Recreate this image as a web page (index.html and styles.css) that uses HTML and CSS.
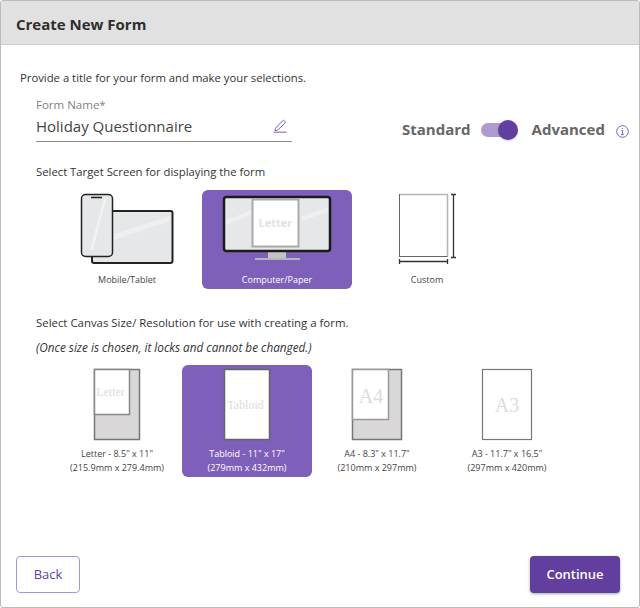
FILE: index.html
```html
<!DOCTYPE html>
<html lang="en">
<head>
    <meta charset="UTF-8">
    <meta name="viewport" content="width=device-width, initial-scale=1.0">
    <title>Create New Form</title>
    <link rel="stylesheet" href="styles.css">
</head>
<body>

    <div class="dialog">
        <h1 class="dialog-header">Create New Form</h1>

        <div class="dialog-body">
            <p class="intro">Provide a title for your form and make your selections.</p>

            <div class="name-row">
                <div class="name-field">
                    <label class="name-label">Form Name*</label>
                    <div class="name-input">
                        <span>Holiday Questionnaire</span>
                        <svg class="edit-icon" width="14" height="14" viewBox="0 0 14 14" fill="none" stroke="#7f5fbb" stroke-width="1">
                            <path d="M2.5 9.2 9.6 1.8a1.2 1.2 0 0 1 1.8 0l.5.5a1.2 1.2 0 0 1 0 1.8L4.6 11.2 2 11.6z"/>
                            <path d="M0.5 13.2h13"/>
                        </svg>
                    </div>
                </div>

                <div class="mode-switch">
                    <span>Standard</span>
                    <div class="toggle"><div class="toggle-knob"></div></div>
                    <span>Advanced</span>
                    <svg class="info-icon" width="13" height="13" viewBox="0 0 13 13" fill="none" stroke="#7f5fbb" stroke-width="1">
                        <circle cx="6.5" cy="6.5" r="5.8"/>
                        <path d="M5.2 5.4h1.5l-.4 4M5 9.6h2.8M6.4 3v1"/>
                    </svg>
                </div>
            </div>

            <p class="section-label target-label">Select Target Screen for displaying the form</p>

            <div class="card-row">
                <div class="card screen-card">
                    <svg width="150" height="80" viewBox="0 0 150 80">
                        <rect x="40" y="21" width="80.500" height="52" rx="2" fill="#e6e7e8" stroke="#222" stroke-width="2"/>
                        <path d="M62 44 118 26v5L62 50z" fill="#eeeff0"/>
                        <rect x="29.500" y="4.500" width="31" height="62" rx="4" fill="#e6e7e8" stroke="#222" stroke-width="1.500"/>
                        <path d="M38 60 52 8h2.500L41 60z" fill="#f1f2f2"/>
                        <path d="M39 7.500h11" stroke="#222" stroke-width="1.500"/>
                    </svg>
                    <span class="card-text">Mobile/Tablet</span>
                </div>

                <div class="card screen-card selected">
                    <svg width="150" height="80" viewBox="0 0 150 80">
                        <path d="M66 61h18v7H66z" fill="#c4c4c4"/>
                        <path d="M53 68h45v2H53z" fill="#b5b5b5"/>
                        <rect x="22" y="7" width="106" height="54" rx="2.500" fill="#e6e7e8" stroke="#1b1b1b" stroke-width="2.500"/>
                        <path d="M24 30 50 20v5L24 35zM100 26l26-9v5l-26 9z" fill="#eeeff0"/>
                        <rect x="50.500" y="9.500" width="46" height="47" fill="#fff" stroke="#aaa" stroke-width="2"/>
                        <text class="page-logo" x="73.500" y="37" text-anchor="middle">Letter</text>
                    </svg>
                    <span class="card-text">Computer/Paper</span>
                </div>

                <div class="card screen-card">
                    <svg width="150" height="80" viewBox="0 0 150 80" fill="none">
                        <rect x="47.500" y="4.500" width="48" height="62" fill="#fff" stroke="#666"/>
                        <path d="M48 4.500h48M95.500 4.500v62" stroke="#b5b5b5" stroke-width="1.500"/>
                        <path d="M101.500 4.500v63M99 4.500h5M99 67.500h5M47.500 71.500h48M47.500 69v5M95.500 69v5" stroke="#333" stroke-width="1.300"/>
                    </svg>
                    <span class="card-text">Custom</span>
                </div>
            </div>

            <p class="section-label canvas-label">Select Canvas Size/ Resolution for use with creating a form.</p>
            <p class="lock-note">(Once size is chosen, it locks and cannot be changed.)</p>

            <div class="card-row size-row">
                <div class="card size-card">
                    <svg width="130" height="78" viewBox="0 0 130 78">
                        <rect x="42.500" y="4.500" width="45" height="70" fill="#d9d7d8" stroke="#777" stroke-width="1.500"/>
                        <rect x="42.500" y="4.500" width="35" height="45" fill="#fff" stroke="#888" stroke-width="1.500"/>
                        <text class="page-name small" x="58.500" y="31" text-anchor="middle">Letter</text>
                    </svg>
                    <span class="card-text">Letter - 8.5" x 11"<br>(215.9mm x 279.4mm)</span>
                </div>

                <div class="card size-card selected">
                    <svg width="130" height="78" viewBox="0 0 130 78">
                        <rect x="42.500" y="4.500" width="45" height="70" fill="#fff" stroke="#666" stroke-width="1.500"/>
                        <text class="page-name small" x="63.500" y="44" text-anchor="middle">Tabloid</text>
                    </svg>
                    <span class="card-text">Tabloid - 11" x 17"<br>(279mm x 432mm)</span>
                </div>

                <div class="card size-card">
                    <svg width="130" height="78" viewBox="0 0 130 78">
                        <rect x="40.500" y="4.500" width="49" height="70" fill="#d9d7d8" stroke="#777" stroke-width="1.500"/>
                        <rect x="40.500" y="4.500" width="36" height="50" fill="#fff" stroke="#999" stroke-width="1.500"/>
                        <text class="page-name large" x="59" y="38" text-anchor="middle">A4</text>
                    </svg>
                    <span class="card-text">A4 - 8.3" x 11.7"<br>(210mm x 297mm)</span>
                </div>

                <div class="card size-card">
                    <svg width="130" height="78" viewBox="0 0 130 78">
                        <rect x="40.500" y="4.500" width="49" height="70" fill="#fff" stroke="#777" stroke-width="1.200"/>
                        <text class="page-name large" x="65" y="47" text-anchor="middle">A3</text>
                    </svg>
                    <span class="card-text">A3 - 11.7" x 16.5"<br>(297mm x 420mm)</span>
                </div>
            </div>
        </div>

        <div class="dialog-footer">
            <button class="btn-back">Back</button>
            <button class="btn-continue">Continue</button>
        </div>
    </div>

</body>
</html>
```

FILE: styles.css
```css
* {
    box-sizing: border-box;
}

body {
    margin: 0;
    font-family: "Open Sans", "Noto Sans", sans-serif;
    background-color: #fff;
    color: #333;
}

p {
    margin: 0;
}

.dialog {
    display: flex;
    flex-direction: column;
    width: 640px;
    height: 608px;
    border: 1px solid #bbb;
    border-radius: 3px;
    overflow: hidden;
}

.dialog-header {
    height: 44px;
    margin: 0;
    padding: 0 15px;
    font-size: 15px;
    line-height: 47px;
    font-weight: 700;
    color: #2e2e2e;
    background-color: #e1e1e1;
    border-bottom: 1px solid #ccc;
}

.dialog-body {
    flex: 1;
    padding: 25px 0 0 19px;
}

.intro {
    font-size: 11.3px;
    line-height: 16px;
}

/* Form name and mode switch */
.name-row {
    display: flex;
    align-items: flex-end;
    padding-left: 16px;
    margin-top: 11px;
}

.name-field {
    width: 256px;
    border-bottom: 1px solid #8c8c8c;
}

.name-label {
    display: block;
    font-size: 11.5px;
    line-height: 16px;
    color: #808080;
}

.name-input {
    display: flex;
    justify-content: space-between;
    align-items: center;
    height: 28px;
    padding: 0 5px 2px 0;
    font-size: 15px;
    color: #444;
}

.mode-switch {
    display: flex;
    align-items: center;
    margin-left: 110px;
    margin-bottom: 1px;
    font-size: 15px;
    line-height: 24px;
    font-weight: 700;
    color: #666;
}

.toggle {
    position: relative;
    width: 33px;
    height: 14px;
    margin: 2px 18px 0 10px;
    background-color: #af9bd0;
    border-radius: 7px;
}

.toggle-knob {
    position: absolute;
    top: -3px;
    right: -4px;
    width: 20px;
    height: 20px;
    background-color: #623e9f;
    border-radius: 50%;
    box-shadow: 0 1px 2px rgba(0, 0, 0, 0.2);
}

.info-icon {
    margin-left: 11px;
    margin-top: 4px;
}

/* Selection sections */
.section-label {
    padding-left: 16px;
    font-size: 11.3px;
    line-height: 16px;
}

.target-label {
    margin-top: 22px;
}

.canvas-label {
    margin-top: 26px;
    font-size: 11.4px;
}

.lock-note {
    margin-top: 8px;
    padding-left: 16px;
    font-size: 11.75px;
    line-height: 16px;
    font-style: italic;
}

.card-row {
    display: flex;
    padding-left: 32px;
}

.size-row {
    margin-top: 10px;
}

.card {
    display: flex;
    flex-direction: column;
    align-items: center;
    border-radius: 6px;
    color: #444;
}

.card svg {
    display: block;
}

.screen-card {
    width: 150px;
    height: 99px;
    margin-top: 10px;
}

.size-card {
    width: 130px;
    height: 112px;
}

.card-text {
    font-size: 9px;
    line-height: 14px;
    text-align: center;
    margin-top: 4px;
}

.screen-card .card-text {
    margin-top: 3px;
}

.selected {
    background-color: #7e5fba;
    color: #fff;
    font-weight: 500;
}

.page-logo {
    font-family: "Open Sans", sans-serif;
    font-size: 11px;
    font-weight: 700;
    fill: #e2e2e2;
}

.page-name {
    font-family: "Liberation Serif", serif;
    font-weight: 400;
    fill: #dcdcdc;
}

.page-name.small {
    font-size: 12px;
}

.page-name.large {
    font-size: 20px;
}

/* Footer buttons */
.dialog-footer {
    display: flex;
    justify-content: space-between;
    padding: 0 19px 14px 15px;
}

.dialog-footer button {
    height: 37px;
    padding: 0 0 2px;
    font-family: inherit;
    font-size: 13px;
    border-radius: 4px;
    cursor: pointer;
}

.btn-back {
    width: 64px;
    font-weight: 500;
    color: #623e9f;
    background-color: #fff;
    border: 1px solid #ac92d8;
}

.btn-continue {
    width: 90px;
    font-weight: 600;
    color: #fff;
    background-color: #623e9f;
    border: none;
    box-shadow: 0 1px 3px rgba(0, 0, 0, 0.35);
}
```
